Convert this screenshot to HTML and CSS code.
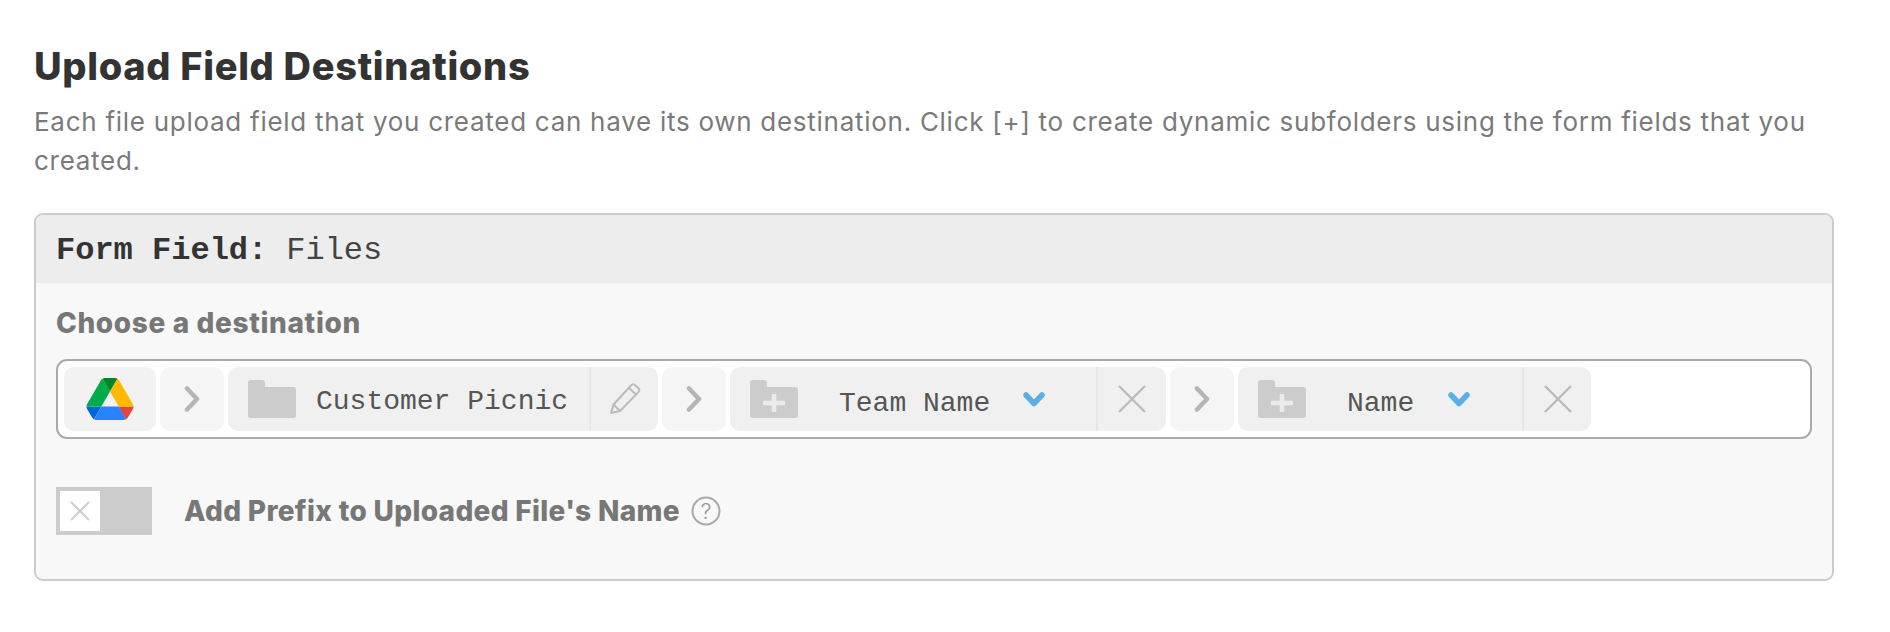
FILE: index.html
```html
<!DOCTYPE html>
<html lang="en">
<head>
<meta charset="utf-8">
<title>Upload Field Destinations</title>
<link rel="stylesheet" href="styles.css">
</head>
<body>
<main class="page">
  <h1 class="title">Upload Field Destinations</h1>
  <p class="intro">Each file upload field that you created can have its own destination. Click [+] to create dynamic subfolders using the form fields that you created.</p>
  <section class="card">
    <header class="card-head"><b>Form Field:</b> Files</header>
    <div class="card-body">
      <h2 class="label label-choose">Choose a destination</h2>
      <div class="path">
        <div class="chip chip-drive">
          <svg class="drive" viewBox="0 0 87.3 78"><path d="m6.6 66.85 3.85 6.65c.8 1.4 1.95 2.5 3.3 3.3l13.75-23.8h-27.5c0 1.55.4 3.1 1.2 4.5z" fill="#0066da"/><path d="m43.65 25-13.75-23.8c-1.35.8-2.5 1.9-3.3 3.3l-25.4 44a9.06 9.06 0 0 0 -1.2 4.5h27.5z" fill="#00ac47"/><path d="m73.55 76.8c1.35-.8 2.5-1.9 3.3-3.3l1.6-2.75 7.65-13.25c.8-1.4 1.2-2.95 1.2-4.5h-27.502l5.852 11.5z" fill="#ea4335"/><path d="m43.65 25 13.75-23.8c-1.35-.8-2.9-1.2-4.5-1.2h-18.5c-1.6 0-3.15.45-4.5 1.2z" fill="#00832d"/><path d="m59.8 53h-32.3l-13.75 23.8c1.35.8 2.9 1.2 4.5 1.2h50.8c1.6 0 3.15-.45 4.5-1.2z" fill="#2684fc"/><path d="m73.4 26.5-12.7-22c-.8-1.4-1.95-2.5-3.3-3.3l-13.75 23.8 16.15 28h27.45c0-1.55-.4-3.1-1.2-4.5z" fill="#ffba00"/></svg>
        </div>
        <div class="chip chip-sep"><svg class="sep" viewBox="0 0 16 26"><path d="M3 2.500l10 10.500L3 23.500" /></svg></div>
        <div class="chip chip-root">
          <svg class="folder" viewBox="0 0 48 38"><path d="M3 0h11a3 3 0 0 1 3 3v4h28a3 3 0 0 1 3 3v25a3 3 0 0 1-3 3H3a3 3 0 0 1-3-3V3a3 3 0 0 1 3-3z"/></svg>
          <span class="name">Customer Picnic</span>
          <span class="action action-edit"><svg class="pencil" viewBox="0 0 32 32"><path d="M2 30l2.500-8.500L22 2.500a3 3 0 0 1 4.200-.3l3 2.700a3 3 0 0 1 .2 4.200L11 28zM4.500 21.500L11 28M20 5l7 6.500"/></svg></span>
        </div>
        <div class="chip chip-sep"><svg class="sep" viewBox="0 0 16 26"><path d="M3 2.500l10 10.500L3 23.500" /></svg></div>
        <div class="chip chip-team">
          <svg class="folder" viewBox="0 0 48 38"><path d="M3 0h11a3 3 0 0 1 3 3v4h28a3 3 0 0 1 3 3v25a3 3 0 0 1-3 3H3a3 3 0 0 1-3-3V3a3 3 0 0 1 3-3z"/><path class="plus" d="M24 14v18M13 23h22"/></svg>
          <span class="name name-field">Team Name</span>
          <svg class="caret" viewBox="0 0 22 15"><path d="M3 3l8 8.500L19 3"/></svg>
          <span class="action action-close"><svg class="cross" viewBox="0 0 28 28"><path d="M1 1l26 26M27 1L1 27"/></svg></span>
        </div>
        <div class="chip chip-sep"><svg class="sep" viewBox="0 0 16 26"><path d="M3 2.500l10 10.500L3 23.500" /></svg></div>
        <div class="chip chip-name">
          <svg class="folder" viewBox="0 0 48 38"><path d="M3 0h11a3 3 0 0 1 3 3v4h28a3 3 0 0 1 3 3v25a3 3 0 0 1-3 3H3a3 3 0 0 1-3-3V3a3 3 0 0 1 3-3z"/><path class="plus" d="M24 14v18M13 23h22"/></svg>
          <span class="name name-field">Name</span>
          <svg class="caret" viewBox="0 0 22 15"><path d="M3 3l8 8.500L19 3"/></svg>
          <span class="action action-close"><svg class="cross" viewBox="0 0 28 28"><path d="M1 1l26 26M27 1L1 27"/></svg></span>
        </div>
      </div>
      <div class="prefix">
        <div class="toggle"><span class="knob"><svg class="knob-x" viewBox="0 0 20 20"><path d="M1 1l18 18M19 1L1 19"/></svg></span></div>
        <span class="label prefix-label">Add Prefix to Uploaded File's Name</span>
        <svg class="help" viewBox="0 0 30 30"><circle cx="15" cy="15" r="13.500"/><text x="15" y="23" text-anchor="middle">?</text></svg>
      </div>
    </div>
  </section>
</main>
</body>
</html>
```
FILE: styles.css
```css
* { box-sizing: border-box; }
html, body { margin: 0; padding: 0; background: #fff; }
body { font-family: "Inter", "Liberation Sans", sans-serif; overflow: hidden; }
.page { width: 1890px; height: 632px; padding: 44px 56px 0 34px; }
.title { margin: 0; font-size: 38px; line-height: 44px; font-weight: 800; color: #333; letter-spacing: 0.69px; }
.intro { margin: 14px 0 0; width: 1800px; font-size: 26px; line-height: 39px; font-weight: 400; color: #7a7a7a; letter-spacing: 0.724px; }
.card { margin-top: 33px; width: 1800px; height: 368px; border: 2px solid #ccc; border-radius: 9px; background: #f8f8f8; overflow: hidden; }
.card-head { height: 68px; padding: 3px 20px 0; display: flex; align-items: center; gap: 19px; background: #ededed; font-family: "Liberation Mono", monospace; font-size: 32px; color: #444; }
.card-head b { color: #333; }
.card-body { padding: 20px 20px 0; }
.label { margin: 0; padding-top: 1px; font-size: 28px; line-height: 38px; font-weight: 800; color: #777; }
.label-choose { letter-spacing: 0.63px; height: 38px; }
.path { margin-top: 18px; width: 1756px; height: 80px; padding: 6px; display: flex; gap: 4px; align-items: stretch; background: #fff; border: 2px solid #aaa; border-radius: 11px; }
.chip { height: 64px; display: flex; align-items: center; border-radius: 10px; background: #f0f0f0; flex: none; }
.chip-drive { width: 92px; justify-content: center; background: #f2f2f2; }
.chip-sep { width: 64px; justify-content: center; background: #f5f5f5; }
.chip-root { width: 430px; padding-left: 20px; }
.chip-team { width: 436px; padding-left: 20px; }
.chip-name { width: 353px; padding-left: 20px; }
.drive { width: 48px; height: 42px; }
.sep { width: 16px; height: 26px; }
.sep path { fill: none; stroke: #b5b5b5; stroke-width: 4.500; stroke-linecap: round; stroke-linejoin: round; }
.folder { width: 48px; height: 38px; flex: none; fill: #ccc; }
.plus { fill: none; stroke: #ebebeb; stroke-width: 4.500; }
.name { font-family: "Liberation Mono", monospace; font-size: 28px; color: #555; white-space: pre; margin: 4px 0 0 20px; width: 273px; }
.name-field { margin: 8px 0 0 41px; width: 184px; }
.chip-name .name-field { width: 101px; }
.caret { width: 22px; height: 15px; flex: none; }
.caret path { fill: none; stroke: #5ab0e6; stroke-width: 5.500; stroke-linecap: round; stroke-linejoin: round; }
.action { align-self: stretch; margin-left: auto; display: flex; align-items: center; justify-content: center; border-left: 2px solid #e6e6e6; flex: none; }
.action-edit { width: 69px; }
.action-close { width: 70px; }
.chip-name .action-close { width: 69px; }
.pencil { width: 32px; height: 32px; fill: none; stroke: #bbb; stroke-width: 2; stroke-linejoin: round; }
.cross { width: 28px; height: 28px; fill: none; stroke: #bbb; stroke-width: 2.400; }
.prefix { margin-top: 48px; height: 48px; display: flex; align-items: center; }
.toggle { width: 96px; height: 48px; background: #ccc; padding: 4px; flex: none; }
.knob { display: flex; width: 40px; height: 40px; background: #fff; align-items: center; justify-content: center; }
.knob-x { width: 20px; height: 20px; fill: none; stroke: #ccc; stroke-width: 2; }
.prefix-label { margin-left: 32px; padding-top: 0; letter-spacing: 0.33px; }
.help { width: 30px; height: 30px; margin-left: 11px; flex: none; }
.help circle { fill: none; stroke: #aaa; stroke-width: 2; }
.help text { font-family: "Inter", sans-serif; font-size: 22px; font-weight: 300; fill: #999; }
```
